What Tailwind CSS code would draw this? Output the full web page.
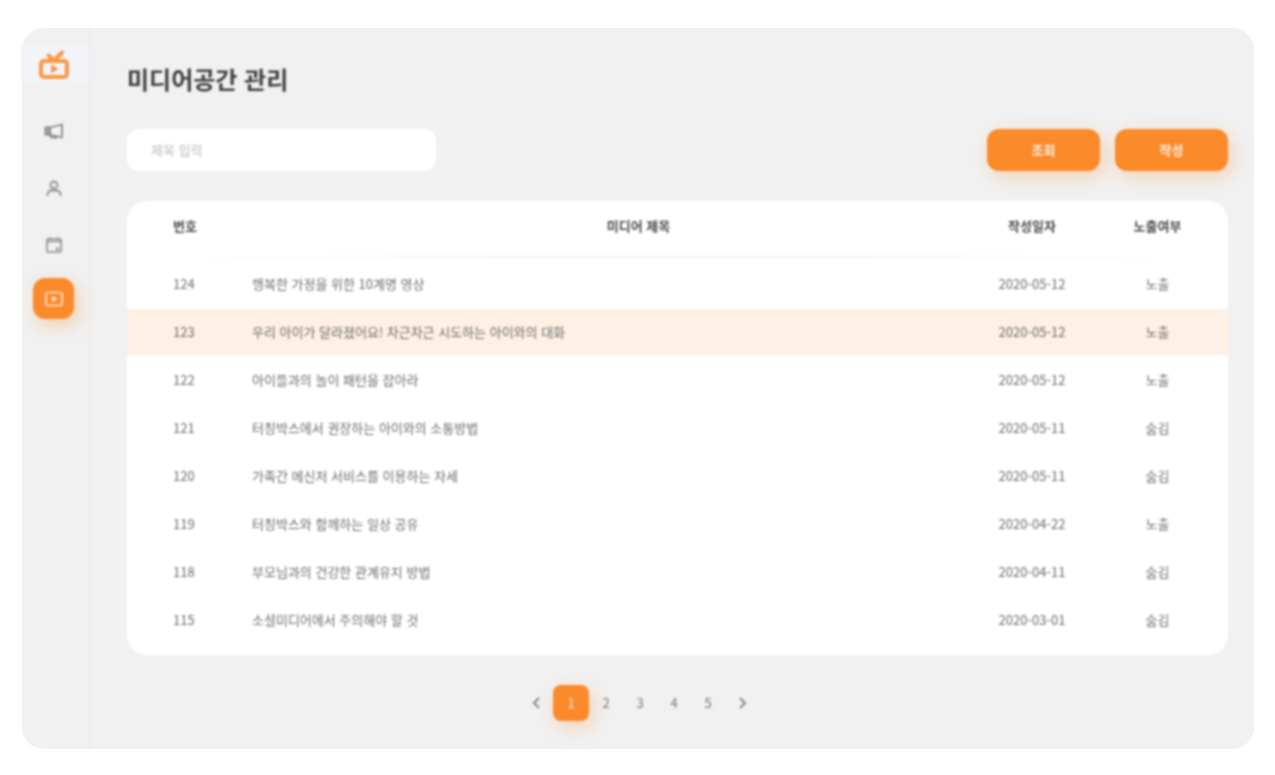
<!DOCTYPE html>
<html lang="ko">
<head>
    <meta charset="UTF-8">
    <meta name="viewport" content="width=device-width, initial-scale=1.0">
    <title>미디어공간 관리</title>
    <script src="https://cdn.jsdelivr.net/npm/@tailwindcss/browser@4"></script>
</head>
<body class="flex min-h-screen bg-white pt-7 pr-[21px] pb-[26px] pl-[22px] font-['Noto_Sans_CJK_KR',sans-serif] text-[13px] text-[#6c6c6c]">
    <div class="flex grow rounded-[22px] bg-[#f1f1f1] shadow-[0_0_12px_rgba(0,0,0,0.015)]">
        <div class="flex grow blur-[1px]">

            <!-- Sidebar -->
            <nav class="flex w-[68px] shrink-0 flex-col border-r border-[#ebebeb] pt-4">
                <a href="#" aria-label="홈" class="flex h-[38px] items-center justify-center bg-[#f2f4f8] pr-1">
                    <svg class="h-8 w-8" viewBox="0 0 32 32" fill="none" stroke="#fc9742" stroke-width="4" stroke-linecap="round" stroke-linejoin="round">
                        <rect x="3" y="14" width="26" height="16" rx="3"/>
                        <path d="M10.500 8.500l5.500 5 8-8"/>
                        <path d="M13.500 18.500v7l6-3.500z" fill="#fc9742" stroke-width="1"/>
                    </svg>
                </a>
                <div class="mt-7 flex flex-col items-center gap-4 pr-1">
                    <a href="#" aria-label="공지" class="flex h-[41px] w-[41px] items-center justify-center">
                        <svg class="h-5 w-5" viewBox="0 0 20 20" fill="none" stroke="#888" stroke-width="1.800" stroke-linejoin="round">
                            <path d="M6 6.500L18 3.500v13L6 13.500z"/>
                            <path d="M1.500 6.500H6v7H1.500z" fill="#aaa"/>
                            <path d="M5 13.500l2.500 3h6"/>
                        </svg>
                    </a>
                    <a href="#" aria-label="회원" class="flex h-[41px] w-[41px] items-center justify-center">
                        <svg class="h-5 w-5" viewBox="0 0 20 20" fill="none" stroke="#8c8c8c" stroke-width="1.800">
                            <circle cx="10" cy="7" r="3.500"/>
                            <path d="M3.500 18v-1.500a4 4 0 0 1 4-4h5a4 4 0 0 1 4 4v1.500"/>
                        </svg>
                    </a>
                    <a href="#" aria-label="일정" class="flex h-[41px] w-[41px] items-center justify-center">
                        <svg class="h-5 w-5" viewBox="0 0 20 20" fill="none" stroke="#8c8c8c" stroke-width="1.600" stroke-linejoin="round">
                            <rect x="3" y="4" width="14" height="13" rx="1"/>
                            <path d="M3 6.500h14M6 2.500V5M14 2.500V5"/>
                            <path d="M12 12.500h3v3h-3z" fill="#999" stroke="none"/>
                        </svg>
                    </a>
                </div>
                <div class="mt-[13px] flex justify-center pr-1">
                    <a href="#" aria-label="미디어공간" aria-current="page" class="flex h-[41px] w-[41px] items-center justify-center rounded-xl bg-[#fb8a2b] shadow-[4px_6px_18px_rgba(251,138,43,0.35)]">
                        <svg class="h-5 w-5" viewBox="0 0 20 20" fill="none" stroke="#ffe8d5" stroke-width="1.600" stroke-linejoin="round">
                            <rect x="2" y="3.500" width="16" height="13" rx="2"/>
                            <path d="M8.500 7.500v5l4-2.500z" fill="#ffe8d5" stroke-width="1"/>
                        </svg>
                    </a>
                </div>
            </nav>

            <main class="flex min-w-0 grow flex-col pt-[31px] pr-[26px] pl-[37px]">
                <h1 class="text-2xl leading-10 font-bold text-[#404040]">미디어공간 관리</h1>

                <!-- Search bar -->
                <form class="mt-[30px] flex items-center gap-[15px]">
                    <input type="text" aria-label="제목 입력" placeholder="제목 입력" class="mr-auto h-[42px] w-[309px] rounded-xl bg-white px-6 pb-0.5 outline-none placeholder:text-[#bbb]">
                    <button type="button" class="h-[42px] w-[113px] rounded-xl bg-[#fb8a2b] pb-px font-bold text-[#fff0e3] shadow-[4px_6px_18px_rgba(251,138,43,0.3)]">조회</button>
                    <button type="button" class="h-[42px] w-[113px] rounded-xl bg-[#fb8a2b] pb-px font-bold text-[#fff0e3] shadow-[4px_6px_18px_rgba(251,138,43,0.3)]">작성</button>
                </form>

                <!-- Media list -->
                <div class="mt-[30px] rounded-[20px] bg-white pb-[11px]">
                    <table class="w-full table-fixed border-separate border-spacing-0">
                        <colgroup>
                            <col class="w-[125px]">
                            <col>
                            <col class="w-[126px]">
                            <col class="w-[133px]">
                        </colgroup>
                        <thead class="text-[#4a4a4a]">
                            <tr class="h-[59px] bg-[linear-gradient(90deg,transparent_3%,#f2f2f2_40%,#f2f2f2_60%,transparent_97%)] bg-[length:100%_2px] bg-[position:0_55px] bg-no-repeat">
                                <th class="pb-[10px] pl-[46px] text-left">번호</th>
                                <th class="pb-[10px] pl-14">미디어 제목</th>
                                <th class="pb-[10px]">작성일자</th>
                                <th class="pr-2 pb-[10px]">노출여부</th>
                            </tr>
                        </thead>
                        <tbody class="[&_td]:h-12 [&_td]:border-y [&_td]:border-transparent [&_td]:bg-clip-padding [&_td:first-child]:pl-[46px] [&_td:nth-child(n+3)]:text-center [&_td:last-child]:pr-2">
                            <tr><td>124</td><td>행복한 가정을 위한 10계명 영상</td><td>2020-05-12</td><td>노출</td></tr>
                            <tr class="[&_td]:bg-[#fef0e4]"><td>123</td><td>우리 아이가 달라졌어요! 차근차근 시도하는 아이와의 대화</td><td>2020-05-12</td><td>노출</td></tr>
                            <tr><td>122</td><td>아이들과의 놀이 패턴을 잡아라</td><td>2020-05-12</td><td>노출</td></tr>
                            <tr><td>121</td><td>터칭박스에서 권장하는 아이와의 소통방법</td><td>2020-05-11</td><td>숨김</td></tr>
                            <tr><td>120</td><td>가족간 메신저 서비스를 이용하는 자세</td><td>2020-05-11</td><td>숨김</td></tr>
                            <tr><td>119</td><td>터칭박스와 함께하는 일상 공유</td><td>2020-04-22</td><td>노출</td></tr>
                            <tr><td>118</td><td>부모님과의 건강한 관계유지 방법</td><td>2020-04-11</td><td>숨김</td></tr>
                            <tr><td>115</td><td>소셜미디어에서 주의해야 할 것</td><td>2020-03-01</td><td>숨김</td></tr>
                        </tbody>
                    </table>
                </div>

                <!-- Pagination -->
                <div class="mt-[30px] flex h-9 items-center justify-center pr-[77px] text-[#777]">
                    <button type="button" aria-label="이전" class="flex h-9 w-[34px] items-center justify-center">
                        <svg class="h-3 w-3" viewBox="0 0 12 12" fill="none" stroke="#888" stroke-width="2"><path d="M9 1L4 6l5 5"/></svg>
                    </button>
                    <button type="button" aria-current="page" class="h-9 w-9 rounded-lg bg-[#fb8a2b] text-[#ffe8d5] shadow-[4px_6px_18px_rgba(251,138,43,0.3)]">1</button>
                    <button type="button" class="h-9 w-[34px]">2</button>
                    <button type="button" class="h-9 w-[34px]">3</button>
                    <button type="button" class="h-9 w-[34px]">4</button>
                    <button type="button" class="h-9 w-[34px]">5</button>
                    <button type="button" aria-label="다음" class="flex h-9 w-[34px] items-center justify-center">
                        <svg class="h-3 w-3" viewBox="0 0 12 12" fill="none" stroke="#888" stroke-width="2"><path d="M4 1l5 5-5 5"/></svg>
                    </button>
                </div>
            </main>
        </div>
    </div>
</body>
</html>
